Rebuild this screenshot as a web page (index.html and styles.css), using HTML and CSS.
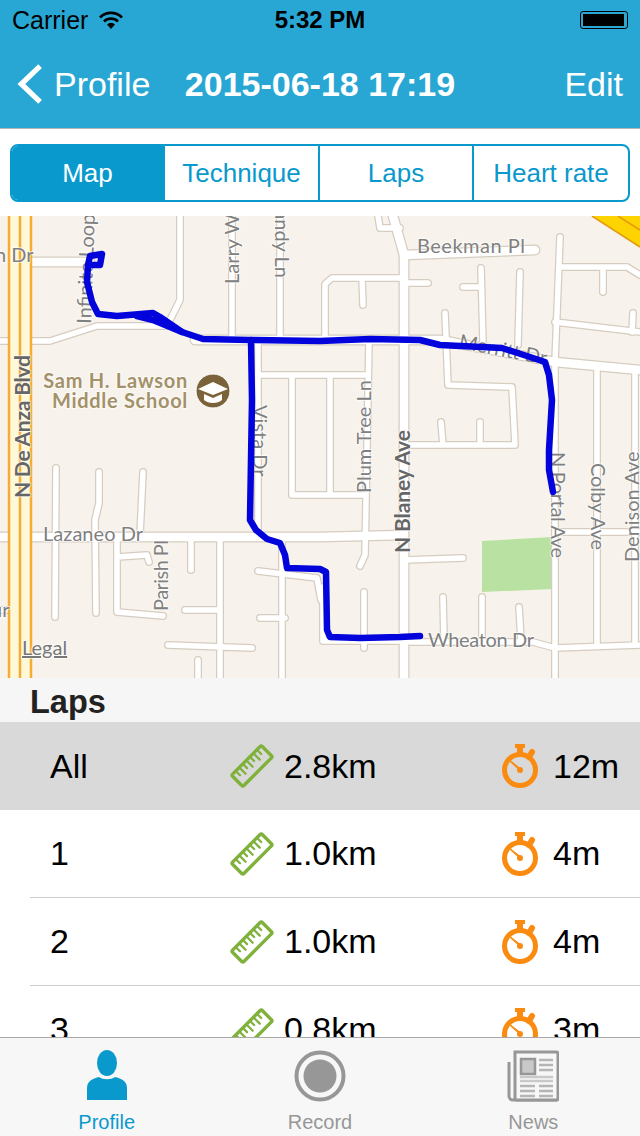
FILE: index.html
```html
<!DOCTYPE html>
<html lang="en">
<head>
    <meta charset="UTF-8">
    <title>Workout</title>
    <link rel="stylesheet" href="styles.css">
</head>
<body>
    <svg class="defs" width="0" height="0">
        <symbol id="ruler" viewBox="0 0 44 44">
            <g transform="rotate(-45 22 22)" fill="none" stroke="#7fb13b" stroke-linecap="round">
                <rect x="1" y="14" width="42" height="16" rx="1.500" stroke-width="3.400"/>
                <path d="M7 15v5M12 15v8M17 15v5M22 15v8M27 15v5M32 15v8M37 15v5" stroke-width="2.200"/>
            </g>
        </symbol>
        <symbol id="watch" viewBox="0 0 38 44">
            <circle cx="19" cy="26" r="15.500" fill="none" stroke="#f98c10" stroke-width="5"/>
            <path d="M14 0h10v4h-2v7h-6V4h-2z" fill="#f98c10"/>
            <path d="M28 13L31 8" stroke="#f98c10" stroke-width="6" stroke-linecap="round"/>
            <path d="M8 16L17.500 23.500L20.500 27.500Z" fill="#f98c10" stroke="#f98c10" stroke-width="1.500" stroke-linejoin="round"/>
            <circle cx="19" cy="26" r="3" fill="#f98c10"/>
        </symbol>
    </svg>

    <div class="page">
        <header class="navbar">
            <div class="status">
                <div class="status-left">
                    <span>Carrier</span>
                    <svg class="wifi" viewBox="0 0 24 18">
                        <path d="M1 6.500a15.500 15.500 0 0 1 22 0" fill="none" stroke="#000" stroke-width="2.600"/>
                        <path d="M5 10.500a10 10 0 0 1 14 0" fill="none" stroke="#000" stroke-width="2.600"/>
                        <path d="M8 13.500a5.500 5.500 0 0 1 8 0l-4 4.500z" fill="#000"/>
                    </svg>
                </div>
                <b class="clock">5:32 PM</b>
                <div class="battery"><i></i></div>
            </div>
            <div class="titlebar">
                <a class="back">
                    <svg class="chevron" viewBox="0 0 27 42">
                        <path d="M24 2.500L4.500 21 24 39.500" fill="none" stroke="#fff" stroke-width="5.500"/>
                    </svg>
                    Profile
                </a>
                <h1>2015-06-18 17:19</h1>
                <a class="edit">Edit</a>
            </div>
        </header>

        <div class="segments">
            <div class="segment active">Map</div>
            <div class="segment">Technique</div>
            <div class="segment">Laps</div>
            <div class="segment">Heart rate</div>
        </div>

        <svg class="map" viewBox="0 216 640 462">
            <defs>
                <g id="thin">
                    <path d="M0 341H50L97 326H167L180 300V216"/>
                    <path d="M232 216V338M280 216V338"/>
                    <path d="M258 340V537"/>
                    <path d="M258 375H365M292 375V495H365M330 375V495"/>
                    <path d="M369 340L365 555L360 566"/>
                    <path d="M378 216L380 228H400"/>
                    <path d="M325 340V284L332 278H403M403 283H428M362 278L363 305"/>
                    <path d="M445 313L448 385L512 387L515 445H404M441 422L443 445M480 422V445"/>
                    <path d="M481 268L483 342M463 287H481M520 272L518 345"/>
                    <path d="M560 237L555 362V678"/>
                    <path d="M560 267H627L640 275M603 267V292"/>
                    <path d="M555 322L640 332M633 313L632 332"/>
                    <path d="M597 368V645M635 370V645"/>
                    <path d="M557 532H640"/>
                    <path d="M410 642H533L555 648L640 645"/>
                    <path d="M443 597L444 640M482 597V640M519 607L521 640M364 592V648"/>
                    <path d="M404 560L463 558"/>
                    <path d="M56 468L55 617M99 472V503L95 520L96 613M143 472L140 535"/>
                    <path d="M117 540V612L163 616M117 557L147 555L149 562"/>
                    <path d="M191 538V570M220 538V678M185 610H220M168 645L252 648M198 660V678"/>
                    <path d="M282 538V678M258 571L317 578L321 600M260 618H285"/>
                    <path d="M323 587V641H404"/>
                    <path d="M0 610H10"/>
                </g>
                <g id="main">
                    <path d="M32 262H90"/>
                    <path d="M195 340H440L555 362L640 370"/>
                    <path d="M0 537H320L404 535"/>
                    <path d="M393 216L404 255V678"/>
                    <path d="M404 255L535 250"/>
                </g>
            </defs>

            <rect class="land" x="0" y="216" width="640" height="462"/>
            <polygon class="park" points="482,541 552,537 553,589 482,592"/>
            <use href="#thin" class="casing-thin"/>
            <use href="#main" class="casing-main"/>
            <use href="#thin" class="road-thin"/>
            <use href="#main" class="road-main"/>

            <rect class="blvd" x="9" y="216" width="22" height="462"/>
            <path class="blvd-line" d="M9 216V678M20 216V678M31 216V678"/>
            <polygon class="freeway" points="592,216 640,216 640,247"/>
            <path class="freeway-line" d="M592 216L640 247M618 216L640 230"/>

            <text class="label" x="417" y="253" textLength="108">Beekman Pl</text>
            <text class="label" x="458" y="348" transform="rotate(11 458 348)">Merritt Dr</text>
            <text class="label" x="43" y="541" textLength="100">Lazaneo Dr</text>
            <text class="label" x="428" y="647" textLength="106">Wheaton Dr</text>
            <text class="label" x="-5" y="262">n Dr</text>
            <text class="label" x="-9" y="617">ur</text>
            <text class="label" transform="translate(91 324) rotate(-88)">Infinite Loop</text>
            <text class="label" transform="translate(239 284) rotate(-90)">Larry Way</text>
            <text class="label" transform="translate(275 278) rotate(90)" text-anchor="end">Randy Ln</text>
            <text class="label" transform="translate(253 405) rotate(90)">Vista Dr</text>
            <text class="label" transform="translate(371 493) rotate(-90)" textLength="113">Plum Tree Ln</text>
            <text class="label" transform="translate(168 611) rotate(-90)" textLength="71">Parish Pl</text>
            <text class="label" transform="translate(551 452) rotate(90)" textLength="106">N Portal Ave</text>
            <text class="label" transform="translate(591 463) rotate(90)" textLength="87">Colby Ave</text>
            <text class="label" transform="translate(639 562) rotate(-90)">Denison Ave</text>
            <text class="label-major" transform="translate(30 498) rotate(-90)" textLength="143">N De Anza Blvd</text>
            <text class="label-major" transform="translate(410 553) rotate(-90)" textLength="123">N Blaney Ave</text>

            <text class="school" x="188" y="388" text-anchor="end">Sam H. Lawson</text>
            <text class="school" x="188" y="408" text-anchor="end">Middle School</text>
            <circle class="school-badge" cx="213" cy="391" r="17"/>
            <path class="school-cap" d="M213 382L228 389L213 395L198 389Z"/>
            <path class="school-cap" d="M204 394L213 398L222 394V400C218 404 208 404 204 400Z"/>

            <text class="legal" x="22" y="655">Legal</text>

            <path class="route" d="M93 265L100 265L102 254L90 256L88 265L87 282L92 302L98 314L117 316L153 313L160 317L182 332L203 339L250 340L320 341L370 339L420 340L440 345L502 348L530 357L545 362L549 375L552 400L549 450L549 470L553 492"/>
            <path class="route" d="M137 316L153 320L182 332"/>
            <path class="route" d="M251 340L252 400L250 520L256 530L267 539L280 543L285 555L287 568L320 569L326 572L327 630L330 637L360 638L400 637L420 636"/>
        </svg>

        <main class="laps">
            <h2>Laps</h2>
            <div class="lap total">
                <span>All</span>
                <span class="metric"><svg class="ruler"><use href="#ruler"/></svg>2.8km</span>
                <span class="metric"><svg class="watch"><use href="#watch"/></svg>12m</span>
            </div>
            <div class="lap">
                <span>1</span>
                <span class="metric"><svg class="ruler"><use href="#ruler"/></svg>1.0km</span>
                <span class="metric"><svg class="watch"><use href="#watch"/></svg>4m</span>
            </div>
            <div class="lap">
                <span>2</span>
                <span class="metric"><svg class="ruler"><use href="#ruler"/></svg>1.0km</span>
                <span class="metric"><svg class="watch"><use href="#watch"/></svg>4m</span>
            </div>
            <div class="lap">
                <span>3</span>
                <span class="metric"><svg class="ruler"><use href="#ruler"/></svg>0.8km</span>
                <span class="metric"><svg class="watch"><use href="#watch"/></svg>3m</span>
            </div>
        </main>

        <nav class="tabbar">
            <div class="tab selected">
                <svg class="tab-icon" viewBox="0 0 52 52">
                    <ellipse cx="26" cy="13" rx="10" ry="13" fill="#0a99cc"/>
                    <path d="M6 50V38C6 32 10 29 18 27C22 30 30 30 34 27C42 29 46 32 46 38V50Z" fill="#0a99cc"/>
                </svg>
                Profile
            </div>
            <div class="tab">
                <svg class="tab-icon" viewBox="0 0 52 52">
                    <circle cx="26" cy="26" r="23.500" fill="none" stroke="#979797" stroke-width="4"/>
                    <circle cx="26" cy="26" r="16.500" fill="#979797"/>
                </svg>
                Record
            </div>
            <div class="tab">
                <svg class="tab-icon" viewBox="0 0 52 52">
                    <path d="M8 6H49a2 2 0 0 1 2 2V48a2 2 0 0 1-2 2H6a4 4 0 0 1-4-4V12" fill="none" stroke="#979797" stroke-width="3"/>
                    <path d="M8 2H49a2 2 0 0 1 2 2V48a2 2 0 0 1-2 2H10a2 2 0 0 1-2-2Z" fill="#f7f7f7" stroke="#979797" stroke-width="3"/>
                    <rect x="14" y="9" width="14" height="15" fill="#c9c9c9" stroke="#979797" stroke-width="2.500"/>
                    <path d="M32 10H46M32 15H46M32 20H46" stroke="#b5b5b5" stroke-width="2.500"/>
                    <path d="M13 27H46M13 31H46" stroke="#c9c9c9" stroke-width="2.500"/>
                    <path d="M13 36H28M13 41H28M13 46H28M32 36H46M32 41H46M32 46H46" stroke="#b5b5b5" stroke-width="2.500"/>
                </svg>
                News
            </div>
        </nav>
    </div>
</body>
</html>
```

FILE: styles.css
```css
* {
    box-sizing: border-box;
}
html, body {
    margin: 0;
    height: 100%;
}
body {
    font-family: "Liberation Sans", Arial, sans-serif;
    background-color: #fff;
    overflow: hidden;
}
.defs {
    position: absolute;
}
.page {
    display: flex;
    flex-direction: column;
    height: 1136px;
    width: 640px;
}

/* top bar */
.navbar {
    flex: none;
    height: 129px;
    background-color: #29a7d4;
    border-bottom: 1px solid #b5b5b5;
    color: #fff;
}
.status {
    display: flex;
    justify-content: space-between;
    align-items: center;
    height: 40px;
    padding: 0 12px;
    color: #000;
    font-size: 25px;
}
.status-left {
    display: flex;
    align-items: center;
    gap: 11px;
    width: 150px;
}
.wifi {
    width: 24px;
    height: 18px;
}
.clock {
    font-size: 24px;
}
.battery {
    width: 48px;
    height: 18px;
    margin-left: 102px;
    padding: 2px 3px 2px 2px;
    border: 1px solid #000;
    border-radius: 3px;
}
.battery i {
    display: block;
    height: 100%;
    background-color: #000;
}
.titlebar {
    display: grid;
    grid-template-columns: 1fr auto 1fr;
    align-items: center;
    height: 88px;
    padding: 0 17px 0 17px;
    font-size: 34px;
}
.back {
    display: flex;
    align-items: center;
    gap: 11px;
}
.chevron {
    width: 26px;
    height: 42px;
}
h1 {
    margin: 0;
    font-size: 34px;
    font-weight: bold;
}
.edit {
    text-align: right;
}

/* segmented control */
.segments {
    flex: none;
    display: grid;
    grid-template-columns: 151px 155px 154px 1fr;
    height: 58px;
    margin: 15px 10px 14px;
    border: 2px solid #0a99cc;
    border-radius: 8px;
    overflow: hidden;
}
.segment {
    display: flex;
    align-items: center;
    justify-content: center;
    color: #0a99cc;
    font-size: 26px;
    border-left: 2px solid #0a99cc;
}
.segment.active {
    background-color: #0a99cc;
    color: #fff;
    border-left: none;
}

/* map */
.map {
    flex: none;
    display: block;
    width: 640px;
    height: 462px;
}
.land {
    fill: #f7f3ec;
}
.park {
    fill: #b9e2a2;
}
.casing-thin, .casing-main, .road-thin, .road-main {
    fill: none;
    stroke-linecap: round;
    stroke-linejoin: round;
}
.casing-thin {
    stroke: #d6ccbf;
    stroke-width: 8;
}
.casing-main {
    stroke: #d6ccbf;
    stroke-width: 11;
}
.road-thin {
    stroke: #fff;
    stroke-width: 5.5;
}
.road-main {
    stroke: #fff;
    stroke-width: 8.5;
}
.blvd {
    fill: #fdf8d8;
}
.blvd-line {
    fill: none;
    stroke: #f8ab33;
    stroke-width: 2.5;
}
.freeway {
    fill: #fdd400;
}
.freeway-line {
    fill: none;
    stroke: #e59a10;
    stroke-width: 1.5;
}
.label, .label-major, .legal, .school {
    font-family: Lato, "Open Sans", sans-serif;
    paint-order: stroke;
    stroke: rgba(255, 255, 255, 0.65);
    stroke-width: 2px;
}
.label {
    font-size: 20px;
    fill: #808080;
}
.label-major {
    font-size: 21px;
    font-weight: bold;
    fill: #666;
}
.school {
    font-size: 20px;
    font-weight: bold;
    letter-spacing: 0.7px;
    fill: #a3916a;
}
.school-badge {
    fill: #7b6238;
    stroke: #fff;
    stroke-width: 1;
}
.school-cap {
    fill: #fff;
}
.legal {
    font-size: 20px;
    fill: #777;
    text-decoration: underline;
}
.route {
    fill: none;
    stroke: #0303dc;
    stroke-width: 6.5;
    stroke-linejoin: round;
    stroke-linecap: round;
}

/* laps list */
.laps {
    flex: 1;
    min-height: 0;
    overflow: hidden;
}
h2 {
    margin: 0;
    height: 44px;
    padding-left: 30px;
    background-color: #f6f6f6;
    color: #222;
    font-size: 32.5px;
    line-height: 48px;
}
.lap {
    display: grid;
    grid-template-columns: 180px 270px 1fr;
    align-items: center;
    height: 88px;
    margin-left: 30px;
    padding-left: 20px;
    border-bottom: 1px solid #ccc;
    color: #000;
    font-size: 34px;
}
.lap.total {
    margin-left: 0;
    padding-left: 50px;
    background-color: #d9d9d9;
    border-bottom: none;
}
.metric {
    display: flex;
    align-items: center;
}
.ruler {
    width: 44px;
    height: 44px;
    margin-right: 10px;
}
.watch {
    width: 38px;
    height: 44px;
    margin: 0 14px 0 1px;
}

/* bottom tabs */
.tabbar {
    flex: none;
    display: grid;
    grid-template-columns: repeat(3, 1fr);
    height: 99px;
    padding-top: 12px;
    background-color: #f7f7f7;
    border-top: 1px solid #a8a8a8;
}
.tab {
    display: flex;
    flex-direction: column;
    align-items: center;
    gap: 9px;
    color: #979797;
    font-size: 20px;
}
.tab.selected {
    color: #0a99cc;
}
.tab-icon {
    width: 52px;
    height: 52px;
}
```
